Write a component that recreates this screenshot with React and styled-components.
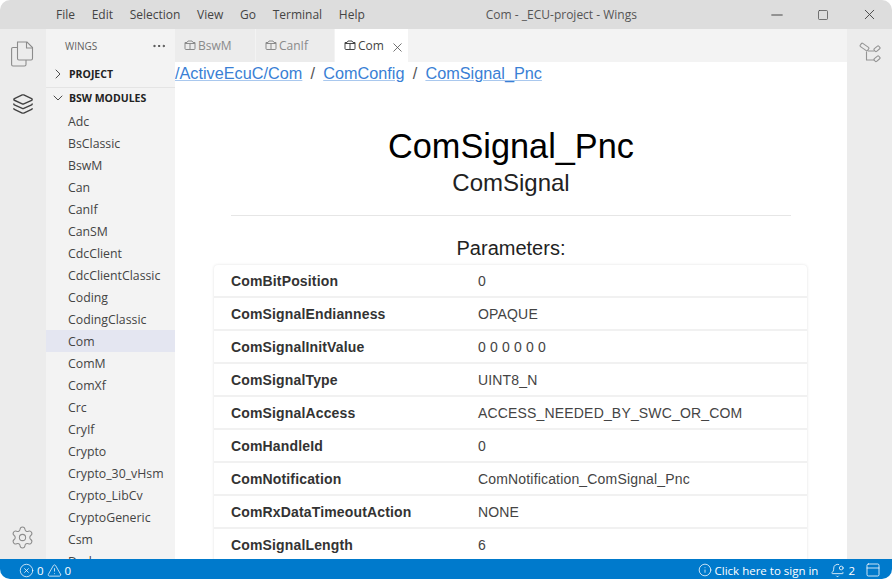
import styled, { createGlobalStyle } from 'styled-components';
import { ChevronDown, ChevronRight, Layers, Settings, X, Minus, Square, Info, BellDot, PanelTop, CircleX, TriangleAlert, Ellipsis } from 'lucide-react';

const MENUS = ['File', 'Edit', 'Selection', 'View', 'Go', 'Terminal', 'Help'];
const MODULES = [
  'Adc', 'BsClassic', 'BswM', 'Can', 'CanIf', 'CanSM', 'CdcClient', 'CdcClientClassic', 'Coding',
  'CodingClassic', 'Com', 'ComM', 'ComXf', 'Crc', 'CryIf', 'Crypto', 'Crypto_30_vHsm', 'Crypto_LibCv',
  'CryptoGeneric', 'Csm', 'Dark',
];
const PARAMS = [
  ['ComBitPosition', '0'],
  ['ComSignalEndianness', 'OPAQUE'],
  ['ComSignalInitValue', '0 0 0 0 0 0'],
  ['ComSignalType', 'UINT8_N'],
  ['ComSignalAccess', 'ACCESS_NEEDED_BY_SWC_OR_COM'],
  ['ComHandleId', '0'],
  ['ComNotification', 'ComNotification_ComSignal_Pnc'],
  ['ComRxDataTimeoutAction', 'NONE'],
  ['ComSignalLength', '6'],
];

const App = () => {
  return (
    <Window>
      <GlobalStyle />
      <TitleBar>
        <Menu>
          {MENUS.map((m) => <MenuItem key={m}>{m}</MenuItem>)}
        </Menu>
        <WindowTitle>Com - _ECU-project - Wings</WindowTitle>
        <WindowControls>
          <WindowButton><Minus size={18} strokeWidth={1.3} /></WindowButton>
          <WindowButton><Square size={12} strokeWidth={1.4} /></WindowButton>
          <WindowButton><X size={17} strokeWidth={1.3} /></WindowButton>
        </WindowControls>
      </TitleBar>
      <Body>
        <ActivityBar>
          <ActivityIcon $muted><CopyIcon /></ActivityIcon>
          <ActivityIcon><Layers size={22} strokeWidth={1.5} /></ActivityIcon>
          <Spacer />
          <ActivityIcon $muted $bottom><Settings size={25} strokeWidth={1} /></ActivityIcon>
        </ActivityBar>
        <SideBar>
          <SideHeader>
            <span>WINGS</span>
            <Ellipsis size={16} strokeWidth={1.5} color="#424242" />
          </SideHeader>
          <SectionHead $height={25}>
            <ChevronRight size={16} strokeWidth={1.2} />
            <span>PROJECT</span>
          </SectionHead>
          <SectionHead $height={23} $divided>
            <ChevronDown size={16} strokeWidth={1.2} />
            <span>BSW MODULES</span>
          </SectionHead>
          <ModuleList>
            {MODULES.map((m) => <Module key={m} $active={m === 'Com'}>{m}</Module>)}
          </ModuleList>
        </SideBar>
        <Editor>
          <TabBar>
            <Tab $width={81}><CubeIcon /><span>BswM</span></Tab>
            <Tab $width={79}><CubeIcon /><span>CanIf</span></Tab>
            <Tab $width={73} $active>
              <CubeIcon />
              <span>Com</span>
              <TabClose><X size={15} strokeWidth={1.2} /></TabClose>
            </Tab>
          </TabBar>
          <Content>
            <Breadcrumbs>
              <a>/ActiveEcuC/Com</a>
              <Sep>/</Sep>
              <a>ComConfig</a>
              <Sep>/</Sep>
              <a>ComSignal_Pnc</a>
            </Breadcrumbs>
            <Title>ComSignal_Pnc</Title>
            <Subtitle>ComSignal</Subtitle>
            <Rule />
            <ParamsHeading>Parameters:</ParamsHeading>
            <ParamsTable>
              {PARAMS.map(([name, value]) => (
                <ParamRow key={name}>
                  <ParamName>{name}</ParamName>
                  <ParamValue>{value}</ParamValue>
                </ParamRow>
              ))}
            </ParamsTable>
          </Content>
        </Editor>
        <RightBar>
          <GraphIcon />
        </RightBar>
      </Body>
      <StatusBar>
        <StatusGroup>
          <CircleX size={15} strokeWidth={1.2} />
          <span>0</span>
          <TriangleAlert size={15} strokeWidth={1.2} />
          <span>0</span>
        </StatusGroup>
        <StatusGroup>
          <Info size={14} strokeWidth={1.3} />
          <SignIn>Click here to sign in</SignIn>
          <BellDot size={15} strokeWidth={1.3} />
          <span>2</span>
          <Panel><PanelTop size={16} strokeWidth={1.2} /></Panel>
        </StatusGroup>
      </StatusBar>
    </Window>
  );
};

const CopyIcon = () => (
  <svg width="23" height="26" viewBox="0 0 23 26" fill="none" stroke="currentColor" strokeWidth="1.1">
    <path d="M6.5 1H16L21.5 6.5V17.5Q21.5 19 20 19H8Q6.5 19 6.5 17.5Z" />
    <path d="M15.5 1V7H21.5" />
    <path d="M6.5 6.5H2Q0.6 6.5 0.6 8V23.5Q0.6 25 2 25H13.5Q15 25 15 23.5V19" />
  </svg>
);

const CubeIcon = () => (
  <svg width="12" height="11" viewBox="0 0 12 11" fill="none" stroke="currentColor" strokeWidth="1">
    <path d="M1 2.5H3L4 1H8L9 2.5H11V8.5Q11 9.5 10 9.5H2Q1 9.5 1 8.5Z" />
    <path d="M1 3.5H11M6 3.5V9.5" />
  </svg>
);

const GraphIcon = () => (
  <svg width="22" height="22" viewBox="0 0 22 22" fill="none" stroke="#949494" strokeWidth="1.1">
    <rect x="1" y="3" width="9" height="4" rx="1" transform="rotate(35 5.5 5)" />
    <rect x="15" y="5" width="6" height="3.5" rx="1" transform="rotate(-40 18 6.7)" />
    <rect x="15" y="15" width="6" height="3.5" rx="1" transform="rotate(-40 18 16.7)" />
    <path d="M9 9H15.5M7.5 9.5V18H15.5" />
  </svg>
);

/**
 * Styled Components
 */
const GlobalStyle = createGlobalStyle`
  html, body {
    margin: 0;
    padding: 0;
    background: #fff;
    overflow: hidden;
  }
`;

const Window = styled.div`
  background: #fff;
  border-radius: 10px;
  display: flex;
  flex-direction: column;
  font-family: "Open Sans", "Noto Sans", sans-serif;
  height: 579px;
  overflow: hidden;
  width: 892px;
`;

const TitleBar = styled.div`
  align-items: center;
  background: #dddddd;
  display: flex;
  flex: 0 0 29px;
`;

const Menu = styled.div`
  display: flex;
  gap: 16.7px;
  padding-left: 56px;
`;

const MenuItem = styled.span`
  color: #444;
  font-size: 12px;
`;

const WindowTitle = styled.div`
  color: #555;
  flex: 1;
  font-size: 12px;
  padding-left: 4px;
  text-align: center;
`;

const WindowControls = styled.div`
  color: #444;
  display: flex;
`;

const WindowButton = styled.div`
  align-items: center;
  display: flex;
  height: 29px;
  justify-content: center;
  width: 46px;
`;

const Body = styled.div`
  display: flex;
  flex: 1;
  min-height: 0;
`;

const ActivityBar = styled.div`
  background: #ececec;
  box-sizing: border-box;
  display: flex;
  flex: 0 0 46px;
  flex-direction: column;
  padding-right: 1px;
`;

const ActivityIcon = styled.div`
  align-items: center;
  color: ${(p) => (p.$muted ? '#8c8c8c' : '#424242')};
  display: flex;
  height: 50px;
  justify-content: center;
  margin-bottom: ${(p) => (p.$bottom ? '-3px' : '0')};
`;

const Spacer = styled.div`
  flex: 1;
`;

const SideBar = styled.div`
  background: #f3f3f3;
  display: flex;
  flex: 0 0 129px;
  flex-direction: column;
  overflow: hidden;
`;

const SideHeader = styled.div`
  align-items: center;
  color: #616161;
  display: flex;
  flex: 0 0 33px;
  font-size: 10px;
  justify-content: space-between;
  padding: 0 8px 0 19px;
`;

const SectionHead = styled.div`
  align-items: center;
  border-top: ${(p) => (p.$divided ? '1px solid #e4e4e4' : '0')};
  box-sizing: border-box;
  color: #222;
  display: flex;
  flex: 0 0 ${(p) => p.$height}px;
  font-size: 10.5px;
  font-weight: 700;
  gap: 3px;
  padding: 0 0 2px 4px;
`;

const ModuleList = styled.div`
  display: flex;
  flex-direction: column;
`;

const Module = styled.div`
  background: ${(p) => (p.$active ? '#e4e6f1' : 'transparent')};
  box-sizing: border-box;
  color: #444;
  flex: 0 0 22px;
  font-size: 12.3px;
  line-height: 20px;
  padding: 2px 0 0 22px;
`;

const Editor = styled.div`
  display: flex;
  flex: 1;
  flex-direction: column;
  min-width: 0;
`;

const TabBar = styled.div`
  background: #f3f3f3;
  display: flex;
  flex: 0 0 33px;
`;

const Tab = styled.div`
  align-items: center;
  background: ${(p) => (p.$active ? '#fff' : '#ececec')};
  border-right: ${(p) => (p.$active ? '0' : '1px solid #f3f3f3')};
  box-sizing: border-box;
  color: ${(p) => (p.$active ? '#444' : '#8a8a8a')};
  display: flex;
  font-size: 12px;
  gap: 2px;
  padding-left: 9px;
  width: ${(p) => p.$width}px;
`;

const TabClose = styled.span`
  align-items: center;
  color: #444;
  display: flex;
  margin: 4px 0 0 4px;
`;

const Content = styled.div`
  flex: 1;
  min-height: 0;
  overflow: hidden;
  font-family: "Liberation Sans", Arial, sans-serif;
`;

const Breadcrumbs = styled.div`
  color: #555;
  font-size: 16.25px;
  height: 22px;
  line-height: 22px;
  a {
    color: #3a7fd5;
    text-decoration: underline;
    text-decoration-color: #a9c8ee;
  }
`;

const Sep = styled.span`
  margin: 0 8.2px;
`;

const Title = styled.h1`
  color: #000;
  font-size: 34.3px;
  font-weight: 400;
  line-height: 42px;
  margin: 41px 0 0;
  text-align: center;
`;

const Subtitle = styled.h2`
  color: #222;
  font-size: 24px;
  font-weight: 400;
  line-height: 28px;
  margin: 2px 0 0;
  text-align: center;
`;

const Rule = styled.div`
  background: #e6e6e6;
  height: 1px;
  margin: 18px 56px 0;
`;

const ParamsHeading = styled.h3`
  color: #222;
  font-size: 20px;
  font-weight: 400;
  line-height: 24px;
  margin: 20px 0 5px;
  text-align: center;
`;

const ParamsTable = styled.div`
  border-radius: 4px;
  box-shadow: 0 0 3px rgba(0, 0, 0, 0.12);
  margin: 0 40px 0 39px;
`;

const ParamRow = styled.div`
  align-items: center;
  border-bottom: 2px solid #f1f1f1;
  box-sizing: border-box;
  display: flex;
  height: 33px;
  padding-left: 17px;
`;

const ParamName = styled.div`
  color: #333;
  flex: 0 0 247px;
  font-size: 14px;
  font-weight: 700;
  letter-spacing: 0.15px;
`;

const ParamValue = styled.div`
  color: #444;
  font-size: 14px;
  letter-spacing: 0.17px;
`;

const RightBar = styled.div`
  background: #ececec;
  box-sizing: border-box;
  display: flex;
  flex: 0 0 45px;
  justify-content: center;
  padding-top: 13px;
`;

const StatusBar = styled.div`
  align-items: center;
  background: #007acc;
  box-sizing: border-box;
  color: #fff;
  display: flex;
  flex: 0 0 20px;
  font-size: 11.5px;
  justify-content: space-between;
  padding: 2px 11px 0 19px;
`;

const StatusGroup = styled.div`
  align-items: center;
  display: flex;
  gap: 3px;
`;

const SignIn = styled.span`
  margin-right: 9px;
`;

const Panel = styled.span`
  align-items: center;
  display: flex;
  margin-left: 7px;
`;

export default App;
